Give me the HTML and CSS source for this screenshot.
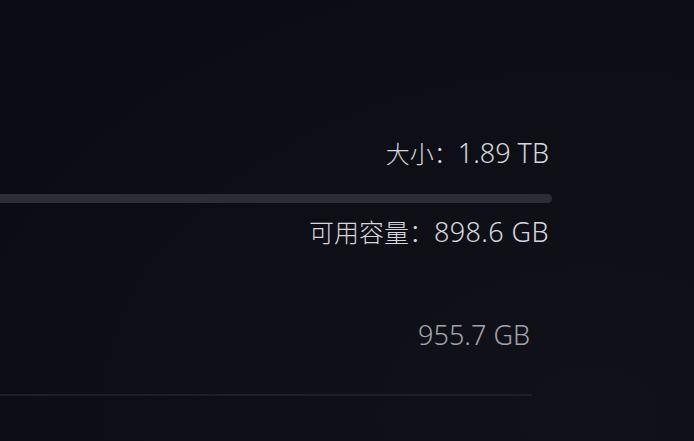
FILE: index.html
```html
<!DOCTYPE html>
<html lang="zh-CN">
<head>
<meta charset="utf-8">
<link rel="stylesheet" href="styles.css">
</head>
<body>
<main class="panel">
  <section class="storage">
    <div class="stat size">大小：<span class="num">1.89 TB</span></div>
    <div class="bar"></div>
    <div class="stat free">可用容量：<span class="num num-wide">898.6 GB</span></div>
  </section>
  <section class="item">
    <div class="item-size">955.7 GB</div>
    <div class="divider"></div>
  </section>
</main>
</body>
</html>
```
FILE: styles.css
```css
html, body {
  margin: 0;
  padding: 0;
  width: 694px;
  height: 441px;
  overflow: hidden;
}
body {
  background: radial-gradient(ellipse 700px 500px at 85% 95%, #111219 0%, #0d0e16 60%, #0b0c14 100%);
  font-family: "Noto Sans", "Noto Sans CJK SC", sans-serif;
  color: #d6d6db;
}
.panel {
  width: 552px;
  display: flex;
  flex-direction: column;
  padding-top: 137px;
}
.storage {
  display: flex;
  flex-direction: column;
}
.stat {
  font-size: 24px;
  line-height: 32px;
  height: 32px;
  text-align: right;
  padding-right: 3px;
  white-space: nowrap;
  font-weight: 300;
}
.free {
  margin-top: 13px;
  font-size: 25px;
}
.num {
  font-size: 27px;
  font-weight: 300;
}
.num-wide {
  letter-spacing: 0.4px;
}
.bar {
  margin-top: 25px;
  height: 9px;
  background: #2c2d35;
  border-radius: 0 5px 5px 0;
}
.item {
  display: flex;
  flex-direction: column;
  margin-top: 70px;
}
.item-size {
  font-size: 27px;
  line-height: 34px;
  height: 34px;
  font-weight: 300;
  color: #a2a3aa;
  text-align: right;
  padding-right: 22px;
}
.divider {
  margin-top: 42px;
  width: 532px;
  height: 2px;
  background: #1e1f28;
}
```
